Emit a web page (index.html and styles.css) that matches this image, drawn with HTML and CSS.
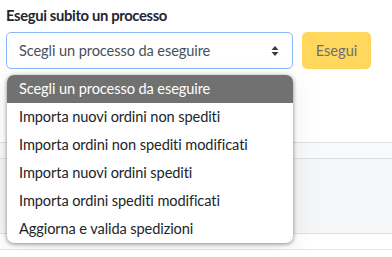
FILE: index.html
```html
<!DOCTYPE html>
<html lang="it">
<head>
  <meta charset="UTF-8" />
  <title>Processi</title>
  <link rel="stylesheet" href="styles.css">
</head>
<body>

  <h2 class="title">Esegui subito un processo</h2>

  <div class="run-form">
    <div class="select-wrap">
      <div class="select">
        <span>Scegli un processo da eseguire</span>
        <svg class="arrows" width="8" height="12" viewBox="0 0 8 12">
          <path d="M4 1 L7.5 5 L0.5 5 Z M4 11 L7.5 7 L0.5 7 Z" fill="#343a40"/>
        </svg>
      </div>
      <ul class="menu">
        <li class="active">Scegli un processo da eseguire</li>
        <li>Importa nuovi ordini non spediti</li>
        <li>Importa ordini non spediti modificati</li>
        <li>Importa nuovi ordini spediti</li>
        <li>Importa ordini spediti modificati</li>
        <li>Aggiorna e valida spedizioni</li>
      </ul>
    </div>
    <button class="btn-run" disabled>Esegui</button>
  </div>

  <div class="table">
    <div class="thead"></div>
    <div class="tbody"></div>
    <div class="tfoot"></div>
  </div>

</body>
</html>
```

FILE: styles.css
```css
body {
  margin: 0;
  padding: 0;
  font-family: Lato, "Liberation Sans", sans-serif;
  background: #fff;
  color: #212529;
}

.title {
  margin: 0;
  padding: 4px 6px 0;
  font-size: 14.8px;
  font-weight: bold;
  letter-spacing: -0.35px;
  line-height: 22px;
  color: #1f2631;
}

.run-form {
  display: flex;
  gap: 9px;
  padding: 6px 6px 0;
}

.select-wrap {
  position: relative;
}

.select {
  width: 287px;
  height: 37px;
  box-sizing: border-box;
  border: 1px solid #86b7fe;
  border-radius: 5px;
  display: flex;
  align-items: center;
  justify-content: space-between;
  padding: 0 13px 0 12px;
  font-size: 14.6px;
  letter-spacing: -0.1px;
  color: #495057;
}

.menu {
  position: absolute;
  top: 43px;
  left: 1px;
  width: 286px;
  margin: 0;
  padding: 0;
  list-style: none;
  background: #fff;
  border-radius: 7px;
  box-shadow: 0 1px 4px rgba(0,0,0,0.45), 0 4px 30px rgba(0,0,0,0.08);
  overflow: hidden;
  z-index: 2;
}

.menu li {
  height: 28px;
  line-height: 28px;
  padding: 0 12px;
  font-size: 14.6px;
  letter-spacing: -0.1px;
  color: #212529;
  white-space: nowrap;
}

.menu li.active {
  background: #717171;
  color: #fff;
}

.btn-run {
  height: 37px;
  width: 69px;
  border: none;
  border-radius: 5px;
  background: #ffd75d;
  color: #6b6f78;
  font-family: inherit;
  font-size: 14.6px;
}

.table {
  margin-top: 73px;
  border-top: 1px solid #dee2e6;
}

.thead {
  height: 15px;
  background: #f8f9fa;
  border-bottom: 1px solid #dee2e6;
}

.tbody {
  height: 74px;
  background: #f5f6f8;
  border-bottom: 1px solid #dee2e6;
}

.tfoot {
  height: 15px;
  background: #fff;
  border-bottom: 1px solid #e5e7ea;
}
```
